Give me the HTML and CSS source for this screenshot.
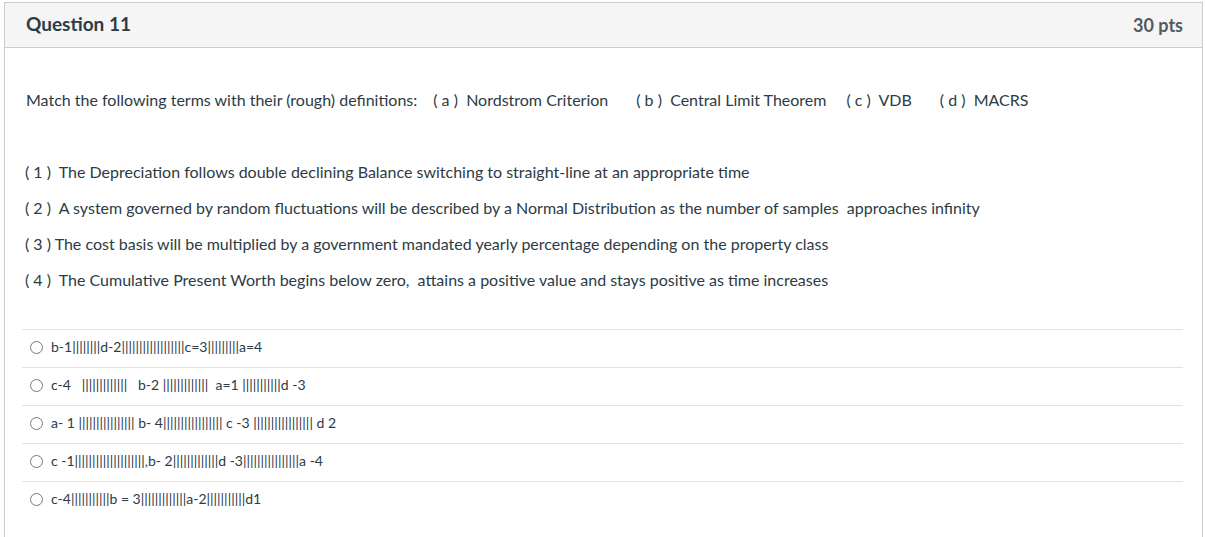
FILE: index.html
```html
<!DOCTYPE html>
<html>
<head>
<meta charset="utf-8">
<link rel="stylesheet" href="styles.css">
</head>
<body>
<div class="quiz">
  <div class="header">
    <span class="title">Question 11</span>
    <span class="pts">30 pts</span>
  </div>
  <div class="body">
    <p class="question">Match the following terms with their (rough) definitions:<span class="term t1">( a )&nbsp; Nordstrom Criterion</span><span class="term t2">( b )&nbsp; Central Limit Theorem</span><span class="term t3">( c )&nbsp; VDB</span><span class="term t4">( d )&nbsp; MACRS</span></p>
    <div class="defs">
      <div class="def">( 1 )&nbsp; The Depreciation follows double declining Balance switching to straight-line at an appropriate time</div>
      <div class="def">( 2 )&nbsp; A system governed by random fluctuations will be described by a Normal Distribution as the number of samples&nbsp; approaches infinity</div>
      <div class="def">( 3 ) The cost basis will be multiplied by a government mandated yearly percentage depending on the property class</div>
      <div class="def">( 4 )&nbsp; The Cumulative Present Worth begins below zero,&nbsp; attains a positive value and stays positive as time increases</div>
    </div>
    <div class="answers">
      <div class="answer"><span class="radio"></span><span class="label">b-1||||||||d-2||||||||||||||||||c=3|||||||||a=4</span></div>
      <div class="answer"><span class="radio"></span><span class="label">c-4&nbsp;&nbsp; |||||||||||||&nbsp;&nbsp; b-2 |||||||||||||&nbsp; a=1 |||||||||||d -3</span></div>
      <div class="answer"><span class="radio"></span><span class="label">a- 1 |||||||||||||||| b- 4||||||||||||||||| c -3 ||||||||||||||||| d 2</span></div>
      <div class="answer"><span class="radio"></span><span class="label">c -1||||||||||||||||||||,b- 2|||||||||||||d -3||||||||||||||||a -4</span></div>
      <div class="answer"><span class="radio"></span><span class="label">c-4|||||||||||b = 3|||||||||||||a-2|||||||||||d1</span></div>
    </div>
  </div>
</div>
</body>
</html>
```

FILE: styles.css
```css
html, body {
  margin: 0;
  padding: 0;
  background: #ffffff;
}
body {
  font-family: Lato, "Liberation Sans", sans-serif;
  color: #2d3b45;
}
.quiz {
  margin: 2px 2px 0 4px;
  border: 1px solid #c7cdd1;
  border-bottom: none;
  height: 540px;
}
.header {
  height: 44px;
  background: #f5f5f5;
  border-bottom: 1px solid #c7cdd1;
  display: flex;
  align-items: center;
  justify-content: space-between;
  padding: 0 19px 0 21px;
}
.title {
  font-size: 19px;
  font-weight: 700;
  color: #2d3b45;
  margin-bottom: 4px;
}
.pts {
  font-size: 18px;
  font-weight: 700;
  color: #555a5e;
}
.body {
  padding: 0 19px 0 21px;
  font-size: 16px;
}
.question {
  margin: 42px 0 0 0;
  line-height: 20px;
}
.term {
  display: inline-block;
}
.t1 { margin-left: 16px; }
.t2 { margin-left: 28px; }
.t3 { margin-left: 20px; }
.t4 { margin-left: 28px; }
.defs {
  margin-top: 44px;
}
.def {
  line-height: 36px;
  margin-left: -1px;
}
.answers {
  margin: 31px 0 0 -4px;
}
.answer {
  border-top: 1px solid #e0e3e5;
  padding: 7px 0 10px 0;
  display: flex;
  align-items: center;
  line-height: 20px;
  font-size: 14px;
}
.radio {
  width: 11px;
  height: 11px;
  border: 1px solid #777b7e;
  border-radius: 50%;
  margin: 0 8px 0 8px;
  flex: none;
}
.label {
  white-space: pre;
}
```
